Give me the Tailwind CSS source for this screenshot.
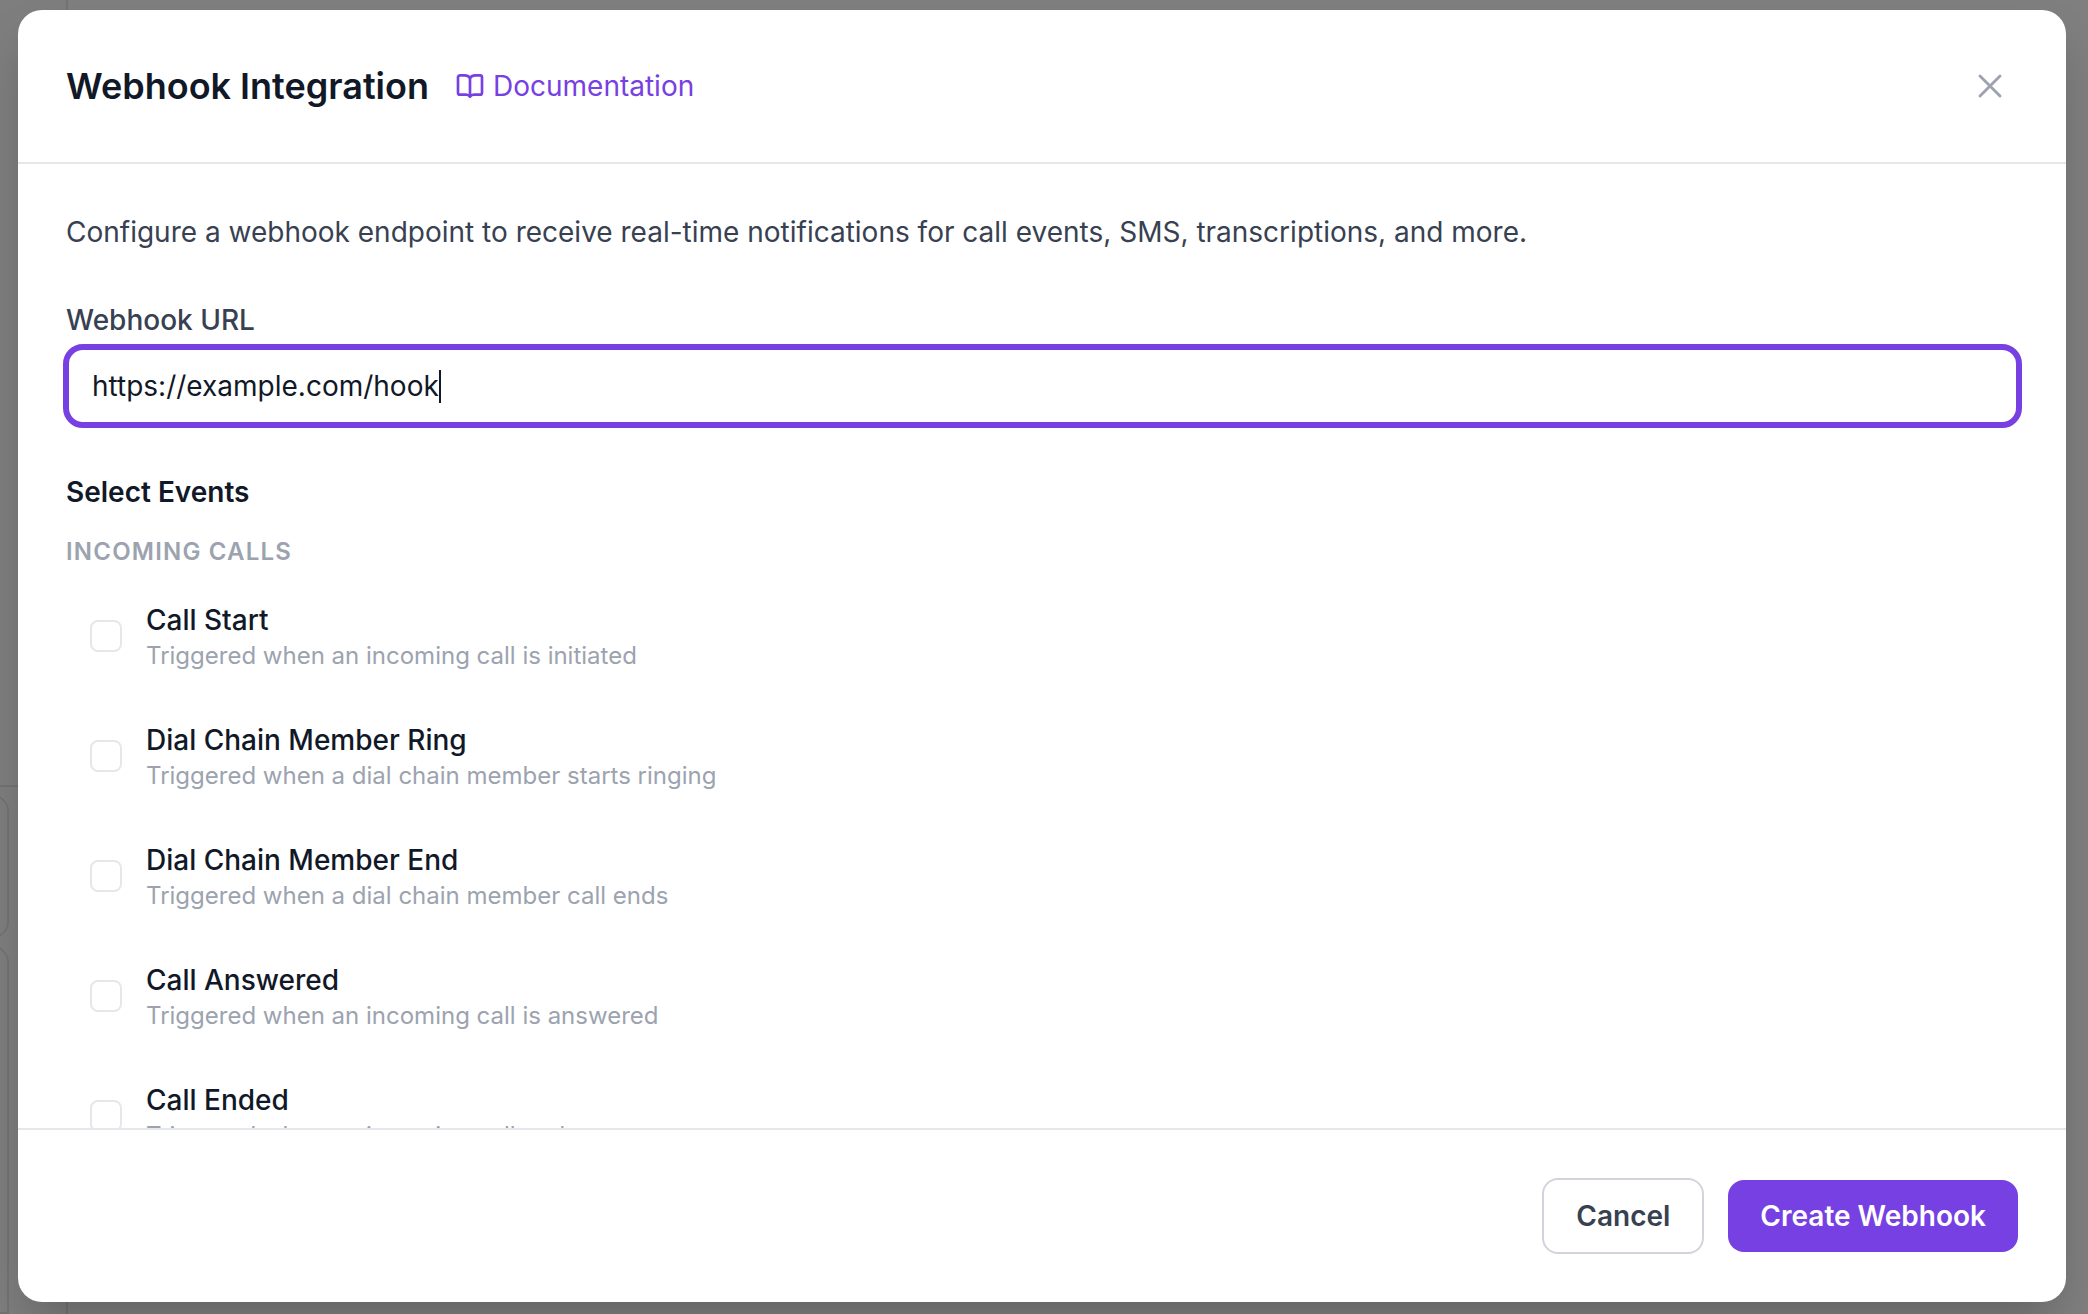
<!DOCTYPE html>
<html lang="en">
<head>
<meta charset="UTF-8" />
<title>Webhook Integration</title>
<script src="https://cdn.jsdelivr.net/npm/@tailwindcss/browser@4"></script>
</head>
<body class="relative h-[1314px] overflow-hidden bg-white font-['Inter',sans-serif]">
<!-- page behind the dialog, only its left edge shows -->
<aside class="flex h-full w-[68px] flex-col border-r-2 border-[#e5e7eb] bg-[#fbfdfb]">
  <div class="h-[787px] shrink-0 border-b-2 border-[#e5e7eb]"></div>
  <div class="mt-[8px] ml-[-20px] h-[143px] w-[29px] shrink-0 rounded-r-[16px] border-2 border-[#e5e7eb]"></div>
  <div class="mt-[8px] ml-[-20px] w-[29px] flex-1 rounded-tr-[16px] border-2 border-[#e5e7eb]"></div>
</aside>

<div class="absolute inset-0 bg-black/50 pt-[10px] pr-[22px] pb-[12px] pl-[18px]">
  <div class="flex h-full flex-col overflow-hidden rounded-[24px] bg-white shadow-2xl">
    <!-- header -->
    <div class="flex h-[154px] shrink-0 items-center border-b-2 border-[#e5e7eb] px-[48px]">
      <h2 class="text-[36px] font-semibold text-[#111827]">Webhook Integration</h2>
      <a class="ml-[25px] flex items-center gap-[7px] text-[28px] text-[#7740e2]">
        <svg class="h-[32px] w-[32px]" viewBox="0 0 24 24" fill="none" stroke="currentColor" stroke-width="2" stroke-linecap="round" stroke-linejoin="round"><path d="M12 6v13.500"/><path d="M12 6C11.200 4.800 9.800 4 8 4H4.500C3.700 4 3 4.700 3 5.500v11.500c0 .8.700 1.500 1.500 1.500H9c1.300 0 2.300.4 3 1.500.7-1.100 1.700-1.500 3-1.500h4.500c.8 0 1.500-.7 1.500-1.500V5.500C21 4.700 20.300 4 19.500 4H16c-1.800 0-3.200.8-4 2z"/></svg>
        Documentation
      </a>
      <button class="ml-auto p-[8px] text-[#9ca3af]">
        <svg class="h-[40px] w-[40px]" viewBox="0 0 24 24" fill="none" stroke="currentColor" stroke-width="1.750" stroke-linecap="round" stroke-linejoin="round"><path d="M18 6 6 18"/><path d="m6 6 12 12"/></svg>
      </button>
    </div>
    <!-- body -->
    <div class="min-h-0 flex-1 overflow-hidden px-[48px] pt-[48px]">
      <p class="text-[28px] leading-[40px] text-[#374151]">Configure a webhook endpoint to receive real-time notifications for call events, SMS, transcriptions, and more.</p>
      <label class="mt-[48px] block text-[28px] leading-[40px] font-medium text-[#374151]">Webhook URL</label>
      <div class="mt-[4px] ml-[-3px] mr-[-4px] flex h-[84px] items-center rounded-[20px] border-[6px] border-[#7740e2] px-[19px] pl-[23px] text-[28px] text-[#111827]">https://example.com/hook<span class="h-[33px] w-[2px] bg-[#111827]"></span></div>
      <h3 class="mt-[44px] text-[28px] leading-[40px] font-semibold text-[#111827]">Select Events</h3>
      <h4 class="mt-[20px] text-[24px] leading-[40px] font-semibold tracking-[0.05em] text-[#9ca3af]">INCOMING CALLS</h4>
      <div class="mt-[28px] flex flex-col gap-[48px] pl-[24px]">
        <label class="flex h-[72px] items-center gap-[24px]">
          <span class="h-[32px] w-[32px] shrink-0 rounded-[8px] border-2 border-[#e5e7eb]"></span>
          <span><span class="block text-[28px] leading-[40px] font-medium text-[#111827]">Call Start</span><span class="block text-[24px] leading-[32px] text-[#9ca3af]">Triggered when an incoming call is initiated</span></span>
        </label>
        <label class="flex h-[72px] items-center gap-[24px]">
          <span class="h-[32px] w-[32px] shrink-0 rounded-[8px] border-2 border-[#e5e7eb]"></span>
          <span><span class="block text-[28px] leading-[40px] font-medium text-[#111827]">Dial Chain Member Ring</span><span class="block text-[24px] leading-[32px] text-[#9ca3af]">Triggered when a dial chain member starts ringing</span></span>
        </label>
        <label class="flex h-[72px] items-center gap-[24px]">
          <span class="h-[32px] w-[32px] shrink-0 rounded-[8px] border-2 border-[#e5e7eb]"></span>
          <span><span class="block text-[28px] leading-[40px] font-medium text-[#111827]">Dial Chain Member End</span><span class="block text-[24px] leading-[32px] text-[#9ca3af]">Triggered when a dial chain member call ends</span></span>
        </label>
        <label class="flex h-[72px] items-center gap-[24px]">
          <span class="h-[32px] w-[32px] shrink-0 rounded-[8px] border-2 border-[#e5e7eb]"></span>
          <span><span class="block text-[28px] leading-[40px] font-medium text-[#111827]">Call Answered</span><span class="block text-[24px] leading-[32px] text-[#9ca3af]">Triggered when an incoming call is answered</span></span>
        </label>
        <label class="flex h-[72px] items-center gap-[24px]">
          <span class="h-[32px] w-[32px] shrink-0 rounded-[8px] border-2 border-[#e5e7eb]"></span>
          <span><span class="block text-[28px] leading-[40px] font-medium text-[#111827]">Call Ended</span><span class="block text-[24px] leading-[32px] text-[#9ca3af]">Triggered when an incoming call ends</span></span>
        </label>
      </div>
    </div>
    <!-- footer -->
    <div class="flex h-[174px] shrink-0 items-center justify-end gap-[24px] border-t-2 border-[#e5e7eb] px-[48px]">
      <button class="h-[76px] rounded-[16px] border-2 border-[#d1d5db] px-[32px] text-[28px] font-semibold text-[#374151]">Cancel</button>
      <button class="h-[72px] rounded-[16px] bg-[#7740e2] px-[32px] text-[28px] font-semibold text-white">Create Webhook</button>
    </div>
  </div>
</div>
</body>
</html>
